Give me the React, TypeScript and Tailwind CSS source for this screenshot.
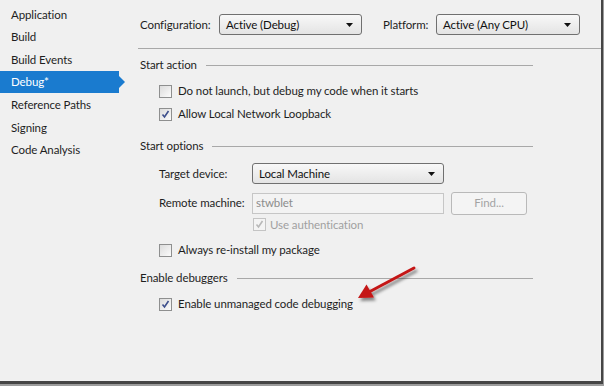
import React from 'react';

const navItems = ['Application', 'Build', 'Build Events', 'Debug*', 'Reference Paths', 'Signing', 'Code Analysis'];

const Checkbox: React.FC<{ checked?: boolean; disabled?: boolean }> = ({ checked, disabled }) => (
  <span
    className={`flex h-[13px] w-[13px] shrink-0 items-center justify-center border ${
      disabled ? 'border-[#c4c4c4] bg-[#f4f4f4]' : 'border-[#8e8f8f] bg-gradient-to-br from-[#dcdcdc] to-[#fbfbfb]'
    }`}
  >
    {checked && (
      <svg width="9" height="9" viewBox="0 0 9 9">
        <path
          d="M1.5 4.5 L3.5 7 L7.5 1"
          fill="none"
          stroke={disabled ? '#b8b8b8' : '#3d4f8c'}
          strokeWidth="1.6"
        />
      </svg>
    )}
  </span>
);

const Combo: React.FC<{ value: string; width: string }> = ({ value, width }) => (
  <div
    className={`${width} flex h-[21px] items-center justify-between rounded-[3px] border border-[#707070] bg-gradient-to-b from-[#f8f8f8] to-[#e4e4e4] pl-[6px] pr-[8px] text-[#111]`}
  >
    <span className="whitespace-nowrap">{value}</span>
    <svg width="7" height="4" viewBox="0 0 7 4">
      <path d="M0 0 H7 L3.5 4 Z" fill="#111" />
    </svg>
  </div>
);

const SectionHeader: React.FC<{ title: string; className?: string }> = ({ title, className }) => (
  <div className={`flex items-center ${className ?? ''}`}>
    <span className="whitespace-nowrap text-[#1e1e1e]">{title}</span>
    <div className="ml-[9px] h-px flex-1 bg-[#a8a8a8]" />
  </div>
);

const CheckRow: React.FC<{ label: string; checked?: boolean; className?: string }> = ({ label, checked, className }) => (
  <div className={`flex items-center gap-[6px] pl-[19px] ${className ?? ''}`}>
    <Checkbox checked={checked} />
    <span className="whitespace-nowrap text-[#1e1e1e]">{label}</span>
  </div>
);

export default function App() {
  return (
    <div className="h-[386px] w-[604px] bg-[#9c9c9c] pb-[2px] pr-px">
      <div
        className="relative flex h-full w-full border-b-[3px] border-r-2 border-[#454545] bg-[#f0f0f0] text-[11.5px] leading-none tracking-[-0.1px]"
        style={{ fontFamily: 'Lato, "Noto Sans", sans-serif' }}
      >
        {/* left nav */}
        <div className="w-[125px] shrink-0 pt-[3px]">
          {navItems.map(item => {
            const active = item === 'Debug*';
            return (
              <div
                key={item}
                className={`relative flex h-[22.6px] items-center whitespace-nowrap pl-[11px] ${
                  active ? 'w-[119px] bg-[#1a7bcf] text-white' : 'text-[#1e1e1e]'
                }`}
              >
                {item}
                {active && (
                  <span className="absolute right-[-6px] top-1/2 h-0 w-0 -translate-y-1/2 border-y-[6px] border-l-[6px] border-y-transparent border-l-[#1a7bcf]" />
                )}
              </div>
            );
          })}
        </div>

        {/* main */}
        <div className="flex flex-1 flex-col pt-[14px]">
          <div className="flex h-[21px] items-center pl-[15px]">
            <span className="w-[79px] text-[#1e1e1e]">Configuration:</span>
            <Combo value="Active (Debug)" width="w-[143px]" />
            <span className="ml-[21px] w-[53px] text-[#1e1e1e]">Platform:</span>
            <Combo value="Active (Any CPU)" width="w-[144px]" />
          </div>

          <div className="ml-[13px] mt-[13px] h-px bg-[#a8a8a8]" />

          <div className="w-[408px] pl-[15px]">
            <SectionHeader title="Start action" className="mt-[15px] h-[2px]" />
            <CheckRow label="Do not launch, but debug my code when it starts" className="mt-[24px] h-[2px]" />
            <CheckRow label="Allow Local Network Loopback" checked className="mt-[21px] h-[2px]" />

            <SectionHeader title="Start options" className="mt-[30px] h-[2px]" />

            <div className="mt-[16px] flex h-[21px] items-center pl-[19px]">
              <span className="w-[93px] text-[#1e1e1e]">Target device:</span>
              <Combo value="Local Machine" width="w-[192px]" />
            </div>

            <div className="mt-[8px] flex h-[22px] items-center pl-[19px]">
              <span className="w-[93px] whitespace-nowrap text-[#1e1e1e]">Remote machine:</span>
              <div className="flex h-[21px] w-[192px] items-center border border-[#c6c6c6] bg-[#f3f3f3] pl-[3px] text-[#8c8c8c]">
                stwblet
              </div>
              <div className="ml-[7px] flex h-[23px] w-[76px] items-center justify-center rounded-[3px] border border-[#b9b9b9] bg-[#f4f4f4] text-[#a3a3a3]">
                Find...
              </div>
            </div>

            <div className="mt-[4px] flex h-[13px] items-center gap-[4px] pl-[113px]">
              <Checkbox checked disabled />
              <span className="whitespace-nowrap text-[#a0a0a0]">Use authentication</span>
            </div>

            <CheckRow label="Always re-install my package" className="mt-[18px] h-[2px]" />

            <SectionHeader title="Enable debuggers" className="mt-[26px] h-[2px]" />
            <CheckRow label="Enable unmanaged code debugging" checked className="mt-[24px] h-[2px]" />
          </div>
        </div>

        {/* annotation arrow */}
        <svg className="pointer-events-none absolute left-0 top-0" width="604" height="386">
          <defs>
            <filter id="sh" x="-20%" y="-20%" width="160%" height="160%">
              <feDropShadow dx="2" dy="3" stdDeviation="1.6" floodColor="#000" floodOpacity="0.45" />
            </filter>
          </defs>
          <g filter="url(#sh)">
            <line x1="414" y1="268" x2="369" y2="292" stroke="#c41414" strokeWidth="3" strokeLinecap="round" />
            <polygon points="358,298 374,297.5 366.5,284.5" fill="#c41414" />
          </g>
        </svg>
      </div>
    </div>
  );
}
